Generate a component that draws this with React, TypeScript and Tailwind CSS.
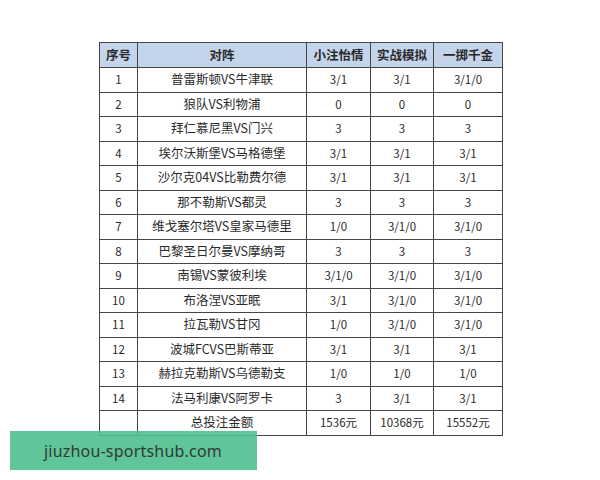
const rows: [string, string, string, string, string][] = [
  ["1", "普雷斯顿VS牛津联", "3/1", "3/1", "3/1/0"],
  ["2", "狼队VS利物浦", "0", "0", "0"],
  ["3", "拜仁慕尼黑VS门兴", "3", "3", "3"],
  ["4", "埃尔沃斯堡VS马格德堡", "3/1", "3/1", "3/1"],
  ["5", "沙尔克04VS比勒费尔德", "3/1", "3/1", "3/1"],
  ["6", "那不勒斯VS都灵", "3", "3", "3"],
  ["7", "维戈塞尔塔VS皇家马德里", "1/0", "3/1/0", "3/1/0"],
  ["8", "巴黎圣日尔曼VS摩纳哥", "3", "3", "3"],
  ["9", "南锡VS蒙彼利埃", "3/1/0", "3/1/0", "3/1/0"],
  ["10", "布洛涅VS亚眠", "3/1", "3/1/0", "3/1/0"],
  ["11", "拉瓦勒VS甘冈", "1/0", "3/1/0", "3/1/0"],
  ["12", "波城FCVS巴斯蒂亚", "3/1", "3/1", "3/1"],
  ["13", "赫拉克勒斯VS乌德勒支", "1/0", "1/0", "1/0"],
  ["14", "法马利康VS阿罗卡", "3", "3/1", "3/1"],
];

const cell = "border border-[#454545] text-center align-middle p-0";

export default function App() {
  return (
    <div className="relative w-[600px] h-[480px] bg-white overflow-hidden font-['Noto_Sans_CJK_SC',sans-serif]">
      <div className="pt-[42px] pl-[99px]">
        <table className="border-collapse table-fixed w-[403px] text-[11.5px] text-[#2a2a2a]">
          <colgroup>
            <col className="w-[38px]" />
            <col className="w-[169px]" />
            <col className="w-[64px]" />
            <col className="w-[63px]" />
            <col className="w-[69px]" />
          </colgroup>
          <thead>
            <tr className="h-[25px] bg-[#c4d4ea] text-[12.5px] font-bold text-[#2a2a2a]">
              <th className={cell}>序号</th>
              <th className={cell}>对阵</th>
              <th className={cell}>小注怡情</th>
              <th className={cell}>实战模拟</th>
              <th className={cell}>一掷千金</th>
            </tr>
          </thead>
          <tbody>
            {rows.map((r) => (
              <tr key={r[0]} className="h-[24.5px]">
                {r.map((v, i) => (
                  <td key={i} className={cell + (i === 1 ? " text-[12.5px]" : "")}>
                    {v}
                  </td>
                ))}
              </tr>
            ))}
            <tr className="h-[24.5px]">
              <td className={cell}></td>
              <td className={cell + " text-[12.5px]"}>总投注金额</td>
              <td className={cell}>1536元</td>
              <td className={cell}>10368元</td>
              <td className={cell}>15552元</td>
            </tr>
          </tbody>
        </table>
      </div>
      <div className="absolute left-[10px] top-[431px] w-[247px] h-[39px] bg-[#4fbf8e]/90 flex items-center pl-[34px]">
        <span className="text-[16px] text-[#2f3a34] font-['Noto_Sans',sans-serif] tracking-[0.2px]">
          jiuzhou-sportshub.com
        </span>
      </div>
    </div>
  );
}
